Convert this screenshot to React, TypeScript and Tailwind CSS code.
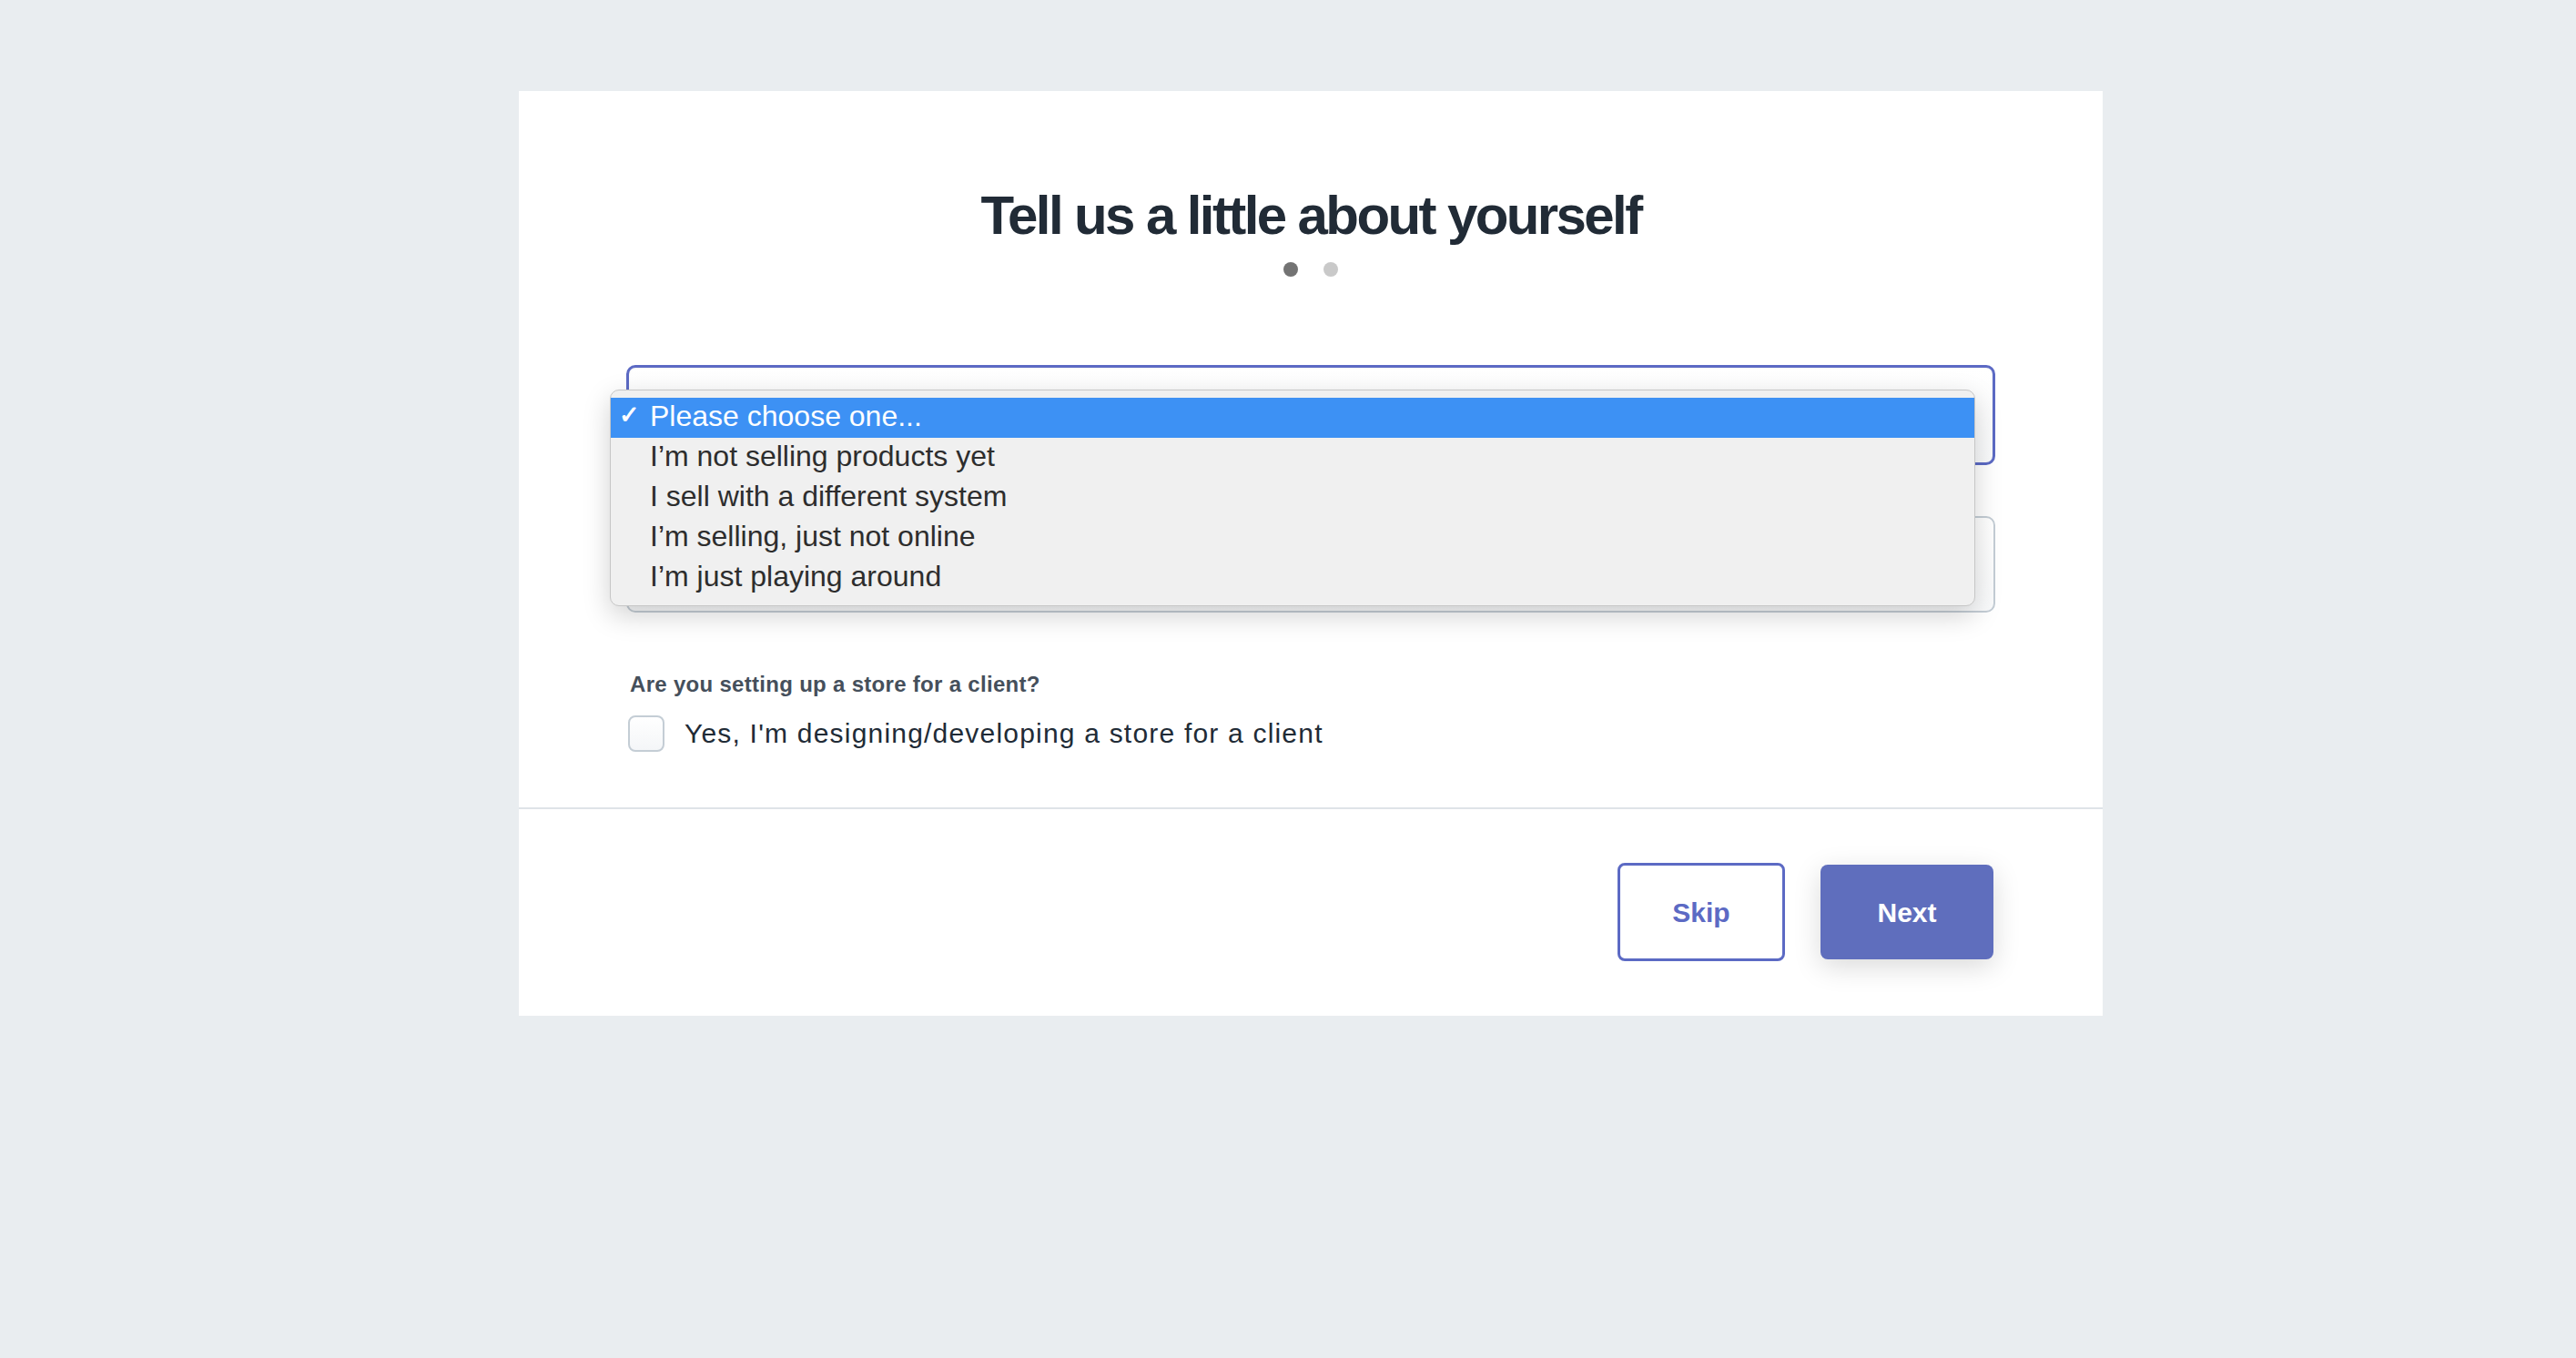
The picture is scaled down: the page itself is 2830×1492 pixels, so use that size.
import React from "react";

const options = [
	"Please choose one...",
	"I’m not selling products yet",
	"I sell with a different system",
	"I’m selling, just not online",
	"I’m just playing around",
];

export default function App() {
	return (
		<div
			className="min-h-screen bg-[#e9edf0] pl-[570px] pt-[100px] pb-[376px]"
			style={{ fontFamily: '"Liberation Sans", Arial, sans-serif' }}
		>
			<div className="w-[1740px] bg-white">
				<div className="pt-[107px] pb-[61px]">
					<h1 className="text-center text-[60px] leading-[60px] font-bold tracking-[-2.6px] text-[#212b36]">
						Tell us a little about yourself
					</h1>
					<div className="mt-[21px] flex justify-center gap-[28px]">
						<span className="h-4 w-4 rounded-full bg-[#737373]" />
						<span className="h-4 w-4 rounded-full bg-[#c9c9c9]" />
					</div>

					<div className="mt-[97px] px-[118px]">
						{/* open select with native menu */}
						<div className="relative z-10">
							<div className="h-[110px] rounded-[10px] border-[3px] border-[#5c6ac4] bg-linear-to-b from-white to-[#f9fafb] shadow-[inset_0_1px_2px_rgba(0,0,0,0.06)]" />
							<div className="absolute left-[-18px] top-[27px] w-[1500px] rounded-[10px] border border-[#c6c6c6] bg-[#f0f0f0] py-2 shadow-[0_10px_30px_rgba(0,0,0,0.18)]">
								{options.map((opt, idx) => (
									<div
										key={idx}
										className={
											idx === 0
												? "flex h-[44px] items-center pb-[5px] bg-[#3d91f4] text-white"
												: "flex h-[44px] items-center pb-[5px] text-[#2d2d2d]"
										}
									>
										<span className="w-[43px] pl-[9px] text-[27px] font-bold leading-none">
											{idx === 0 ? "✓" : ""}
										</span>
										<span className="text-[32px] leading-none">{opt}</span>
									</div>
								))}
							</div>
						</div>

						<div className="mt-[56px] h-[106px] rounded-[10px] border-2 border-[#c4cdd5] bg-linear-to-b from-white to-[#f9fafb]" />

						<p className="mt-[67px] ml-1 text-[24px] leading-[24px] font-bold tracking-[0.3px] text-[#454f5b]">
							Are you setting up a store for a client?
						</p>
						<label className="mt-[22px] ml-[2px] flex items-center gap-[22px]">
							<span className="h-[40px] w-[40px] rounded-[8px] border-2 border-[#c4cdd5] bg-linear-to-b from-white to-[#f4f6f8]" />
							<span className="text-[30px] leading-[30px] tracking-[1.2px] text-[#212b36]">
								Yes, I'm designing/developing a store for a client
							</span>
						</label>
					</div>
				</div>

				<div className="h-[2px] bg-[#dfe3e8]" />

				<div className="flex items-center justify-end gap-[39px] pt-[59px] pb-[60px] pr-[120px]">
					<button
						type="button"
						className="h-[108px] w-[184px] rounded-[8px] border-[3px] border-[#5c6ac4] bg-white text-[30px] font-bold text-[#5c6ac4]"
					>
						Skip
					</button>
					<button
						type="button"
						className="h-[104px] w-[190px] rounded-[8px] bg-[#5f6ebd] text-[30px] font-bold text-white shadow-[0_8px_30px_rgba(0,0,0,0.15)]"
					>
						Next
					</button>
				</div>
			</div>
		</div>
	);
}
